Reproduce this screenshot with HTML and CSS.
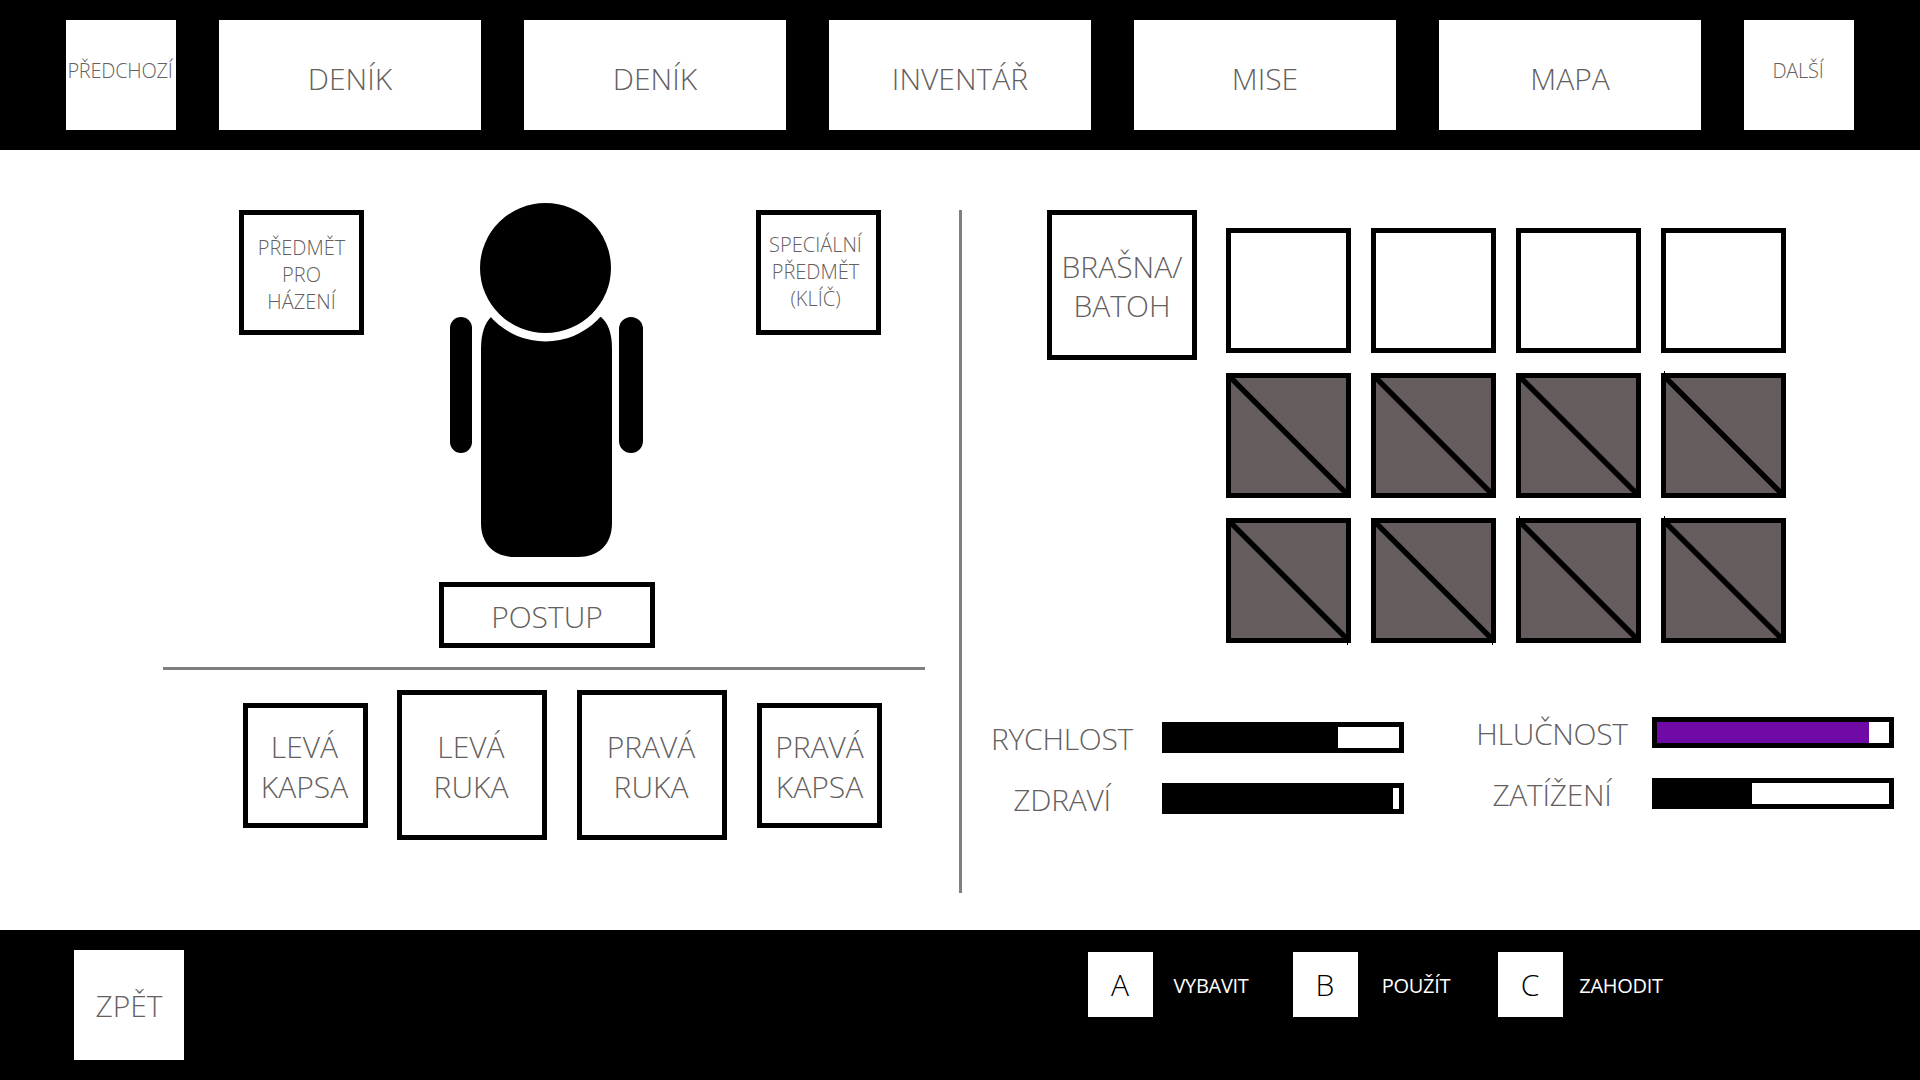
FILE: index.html
```html
<!DOCTYPE html>
<html lang="cs">
<head>
<meta charset="utf-8">
<title>Inventář</title>
<link rel="stylesheet" href="styles.css">
</head>
<body>
<header class="top">
  <a class="tab tab-small">PŘEDCHOZÍ</a>
  <a class="tab">DENÍK</a>
  <a class="tab">DENÍK</a>
  <a class="tab">INVENTÁŘ</a>
  <a class="tab">MISE</a>
  <a class="tab">MAPA</a>
  <a class="tab tab-small">DALŠÍ</a>
</header>
<main class="main">
  <section class="left">
    <div class="equip">
      <div class="box box-s text-sm throw">PŘEDMĚT<br>PRO<br>HÁZENÍ</div>
      <div class="figure">
        <svg class="person" width="193" height="354" viewBox="0 0 193 354">
          <path d="M41 114 C35 120 31 130 31 146 V320 C31 342 45 354 65 354 H128 C148 354 162 342 162 320 V146 C162 130 158 120 151 114 Z"/>
          <circle cx="95.5" cy="65" r="73.5" fill="#fff"/>
          <ellipse cx="95.5" cy="65" rx="65.5" ry="65"/>
          <rect x="0" y="114" width="22" height="136" rx="11"/>
          <rect x="169" y="114" width="24" height="136" rx="12"/>
        </svg>
        <div class="box postup text-lg">POSTUP</div>
      </div>
      <div class="box box-s text-sm special">SPECIÁLNÍ<br>PŘEDMĚT<br>(KLÍČ)</div>
    </div>
    <div class="rule"></div>
    <div class="hands">
      <div class="box box-s text-lg hand-first">LEVÁ<br>KAPSA</div>
      <div class="box box-l text-lg hand-shift">LEVÁ<br>RUKA</div>
      <div class="box box-l text-lg hand-shift">PRAVÁ<br>RUKA</div>
      <div class="box box-s text-lg">PRAVÁ<br>KAPSA</div>
    </div>
  </section>
  <div class="vrule"></div>
  <section class="right">
    <div class="pack">
      <div class="box box-l text-lg bag">BRAŠNA/<br>BATOH</div>
      <div class="slots">
        <div class="slot"></div><div class="slot"></div><div class="slot"></div><div class="slot"></div>
        <div class="slot locked"></div><div class="slot locked"></div><div class="slot locked"></div><div class="slot locked tick-top"></div>
        <div class="slot locked tick-bottom"></div><div class="slot locked tick-bottom"></div><div class="slot locked tick-top"></div><div class="slot locked tick-top"></div>
      </div>
    </div>
    <div class="stats">
      <div class="stat-group stat-left">
        <span class="stat-label">RYCHLOST</span>
        <div class="bar"><div class="fill" style="width:73.5%"></div></div>
        <span class="stat-label">ZDRAVÍ</span>
        <div class="bar"><div class="fill" style="width:97.4%"></div></div>
      </div>
      <div class="stat-group">
        <span class="stat-label">HLUČNOST</span>
        <div class="bar"><div class="fill fill-noise" style="width:91.4%"></div></div>
        <span class="stat-label">ZATÍŽENÍ</span>
        <div class="bar"><div class="fill" style="width:41%"></div></div>
      </div>
    </div>
  </section>
</main>
<footer class="bottom">
  <a class="tab back">ZPĚT</a>
  <div class="actions">
    <div class="action"><span class="key">A</span><span class="action-label">VYBAVIT</span></div>
    <div class="action"><span class="key">B</span><span class="action-label">POUŽÍT</span></div>
    <div class="action"><span class="key">C</span><span class="action-label">ZAHODIT</span></div>
  </div>
</footer>
</body>
</html>
```
FILE: styles.css
```css
* { box-sizing: border-box; }
html, body { margin: 0; padding: 0; }
body {
  width: 1920px;
  height: 1080px;
  overflow: hidden;
  background: #fff;
  font-family: "Open Sans", "Noto Sans", sans-serif;
  font-weight: 300;
  color: #646060;
}
.top {
  height: 150px;
  background: #000;
  display: flex;
  gap: 43px;
  padding: 20px 66px;
}
.tab {
  width: 262px;
  height: 110px;
  background: #fff;
  display: flex;
  align-items: center;
  justify-content: center;
  font-size: 30px;
  padding-top: 7px;
}
.tab-small {
  width: 110px;
  font-size: 20px;
  padding: 0 2px 10px 0;
  letter-spacing: -0.25px;
}
.main {
  height: 780px;
  display: flex;
  align-items: flex-start;
  padding-top: 53px;
}
.left {
  width: 762px;
  margin-left: 163px;
}
.equip {
  display: flex;
  align-items: flex-start;
  padding-left: 76px;
}
.box {
  border: 5px solid #000;
  background: #fff;
  display: flex;
  align-items: center;
  justify-content: center;
  text-align: center;
  flex: none;
}
.box-s { width: 125px; height: 125px; }
.box-l { width: 150px; height: 150px; }
.text-sm { font-size: 20px; line-height: 27px; padding-top: 4px; }
.text-lg { font-size: 30px; line-height: 40px; padding-top: 4px; }
.throw { margin-top: 7px; margin-right: 75px; }
.special { margin-top: 7px; margin-left: 101px; padding: 0 6px 2px 0; }
.figure {
  width: 216px;
  display: flex;
  flex-direction: column;
  align-items: center;
}
.person { display: block; fill: #000; margin-left: -1px; }
.postup { width: 216px; height: 66px; margin-top: 25px; }
.rule {
  height: 3px;
  background: #7f7f7f;
  margin-top: 19px;
}
.hands {
  display: flex;
  align-items: center;
  gap: 30px;
  margin-top: 20px;
  padding-left: 80px;
}
.hand-first { margin-right: -1px; padding-right: 2px; }
.hand-shift { padding-right: 2px; }
.vrule {
  width: 3px;
  height: 683px;
  margin-left: 34px;
  margin-top: 7px;
  background: #7f7f7f;
  flex: none;
}
.right { flex: 1; }
.pack {
  display: flex;
  align-items: flex-start;
  gap: 29px;
  padding: 7px 0 0 85px;
}
.bag { font-size: 30px; line-height: 39px; padding-top: 1px; }
.slots {
  display: grid;
  grid-template-columns: repeat(4, 125px);
  grid-auto-rows: 125px;
  gap: 20px;
  margin-top: 18px;
}
.slot { border: 5px solid #000; background: #fff; position: relative; }
.locked {
  background-color: #655d5d;
  background-image: linear-gradient(to top right, transparent calc(50% - 3px), #000 calc(50% - 2.5px), #000 calc(50% + 2.5px), transparent calc(50% + 3px));
  background-origin: border-box;
  background-clip: border-box;
}
.tick-top::after, .tick-bottom::after {
  content: "";
  position: absolute;
  width: 1px;
  height: 2px;
  background: #000;
}
.tick-top::after { left: -2px; top: -7px; }
.tick-bottom::after { right: -2px; bottom: -7px; }
.stats {
  display: flex;
  gap: 48px;
  margin-top: 74px;
  align-items: flex-start;
}
.stat-group {
  display: grid;
  grid-template-columns: 200px 242px;
  grid-auto-rows: 31px;
  row-gap: 30px;
}
.stat-left { margin-top: 5px; }
.stat-label {
  font-size: 30px;
  line-height: 31px;
  padding-top: 1px;
  text-align: center;
  white-space: nowrap;
  letter-spacing: -0.3px;
}
.bar {
  height: 31px;
  border: 5px solid #000;
  background: #fff;
}
.fill { height: 100%; background: #000; }
.fill-noise { background: #6f0aa6; }
.bottom {
  height: 150px;
  background: #000;
  display: flex;
  align-items: flex-start;
  padding: 20px 0 0 74px;
}
.back { width: 110px; height: 110px; padding-top: 0; }
.actions {
  display: flex;
  gap: 24px;
  margin-left: 904px;
  margin-top: 2px;
}
.action { display: flex; align-items: center; }
.key {
  width: 65px;
  height: 65px;
  background: #fff;
  color: #000;
  display: flex;
  align-items: center;
  justify-content: center;
  font-size: 30px;
  padding-right: 1px;
}
.action-label {
  width: 116px;
  text-align: center;
  color: #fff;
  font-size: 20px;
  font-weight: 400;
  letter-spacing: -0.3px;
  padding-top: 2px;
}
```
